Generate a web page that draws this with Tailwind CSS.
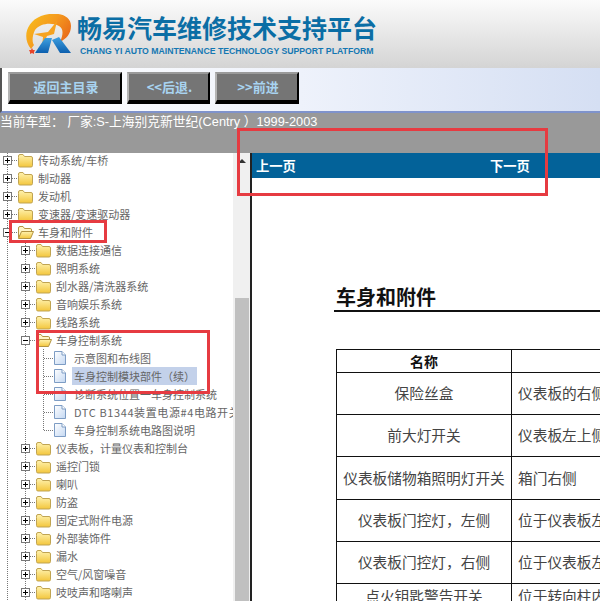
<!DOCTYPE html>
<html lang="zh">
<head>
<meta charset="utf-8">
<script src="https://cdn.jsdelivr.net/npm/@tailwindcss/browser@4"></script>
</head>
<body class="m-0 bg-white">
<svg width="0" height="0" class="absolute">
  <defs>
    <linearGradient id="fg" x1="0" y1="0" x2="0" y2="1"><stop offset="0" stop-color="#fff3b0"/><stop offset="1" stop-color="#f3c63c"/></linearGradient>
    <linearGradient id="dg" x1="0" y1="0" x2="1" y2="1"><stop offset="0" stop-color="#ffffff"/><stop offset="1" stop-color="#c4d8f2"/></linearGradient>
    <linearGradient id="ring" x1="0" y1="0" x2="1" y2="0.6"><stop offset="0" stop-color="#f7c21c"/><stop offset="0.55" stop-color="#f59a1e"/><stop offset="1" stop-color="#e8691a"/></linearGradient>
    <linearGradient id="leg" x1="0" y1="0" x2="0" y2="1"><stop offset="0" stop-color="#3fa0e0"/><stop offset="1" stop-color="#0c5fae"/></linearGradient>
    <symbol id="folder" viewBox="0 0 15 15"><path d="M0.5 4.5 V3 Q0.5 1.5 2 1.5 H5 L6.5 3.5 H13 Q14.5 3.5 14.5 5 V12.5 Q14.5 14 13 14 H2 Q0.5 14 0.5 12.5 Z" fill="url(#fg)" stroke="#c0a452"/></symbol>
    <symbol id="folder-open" viewBox="0 0 16 15"><path d="M0.5 12.5 V3 Q0.5 1.5 2 1.5 H5 L6.5 3.5 H12.5 Q13.5 3.5 13.5 5 V7 H4 Z" fill="#fff6c8" stroke="#b39442"/><path d="M0.5 13.5 L3.5 6.5 H15.5 L12.5 13.5 Z" fill="url(#fg)" stroke="#b39442"/></symbol>
    <symbol id="doc" viewBox="0 0 12 14"><path d="M0.5 0.5 H8 L11.5 4 V13.5 H0.5 Z" fill="url(#dg)" stroke="#7d9cc4"/><path d="M8 0.5 V4 H11.5" fill="#fff" stroke="#7d9cc4"/></symbol>
    <symbol id="p0" viewBox="0 0 18 18"><path d="M7.5 0 V18 M12 9.5 H18" stroke="#777" stroke-dasharray="1 1" fill="none"/><rect x="3.5" y="5.5" width="8" height="8" fill="#fff" stroke="#777"/><path d="M5 9.5 H10 M7.5 7 V12" stroke="#000"/></symbol>
    <symbol id="m0" viewBox="0 0 18 18"><path d="M7.5 0 V18 M12 9.5 H18" stroke="#777" stroke-dasharray="1 1" fill="none"/><rect x="3.5" y="5.5" width="8" height="8" fill="#fff" stroke="#777"/><path d="M5 9.5 H10" stroke="#000"/></symbol>
    <symbol id="p1" viewBox="0 0 36 18"><path d="M7.5 0 V18 M25.5 0 V18 M30 9.5 H36" stroke="#777" stroke-dasharray="1 1" fill="none"/><rect x="21.5" y="5.5" width="8" height="8" fill="#fff" stroke="#777"/><path d="M23 9.5 H28 M25.5 7 V12" stroke="#000"/></symbol>
    <symbol id="m1" viewBox="0 0 36 18"><path d="M7.5 0 V18 M25.5 0 V18 M30 9.5 H36" stroke="#777" stroke-dasharray="1 1" fill="none"/><rect x="21.5" y="5.5" width="8" height="8" fill="#fff" stroke="#777"/><path d="M23 9.5 H28" stroke="#000"/></symbol>
    <symbol id="l2" viewBox="0 0 54 18"><path d="M7.5 0 V18 M25.5 0 V18 M43.5 0 V18 M44 9.5 H54" stroke="#777" stroke-dasharray="1 1" fill="none"/></symbol>
    <symbol id="l2e" viewBox="0 0 54 18"><path d="M7.5 0 V18 M25.5 0 V18 M43.5 0 V9.5 H54" stroke="#777" stroke-dasharray="1 1" fill="none"/></symbol>
  </defs>
</svg>

<div class="relative w-[600px] h-[601px] overflow-hidden font-['Noto_Sans_CJK_SC','Liberation_Sans',sans-serif]">

  <!-- header -->
  <header class="h-[68px] bg-gradient-to-b from-[#fbfbfb] to-[#d4d4d4] flex items-start pl-[25px] pt-[14px] gap-[6px]">
    <svg class="w-[46px] h-[41px] shrink-0" viewBox="0 0 46 41">
      <path d="M6 35 C-3 24 1 8 16 2 C30 -3 46 0 46 12 C46 20 41 25 35 28 C38 21 39 15 34 12 C27 8 15 9 10 16 C7 22 7 28 9 31 Z" fill="url(#ring)"/>
      <path d="M9 20 L23 18 L32 7 L29 20 L22 22 L17 33 L18 23 Z" fill="#f6a320"/>
      <path d="M10 39 L20 24 L27 24 L23 39 Z" fill="url(#leg)"/>
      <path d="M27 26 L34 23 L46 39 L35 39 Z" fill="url(#leg)"/>
      <path d="M7 34 L8 36 L10 36 L9 38 L9 40 L7 39 L5 40 L5 38 L4 36 L6 36 Z" fill="#e8452a"/>
    </svg>
    <div class="flex flex-col">
      <div class="text-[25px] leading-[27px] font-bold text-[#0b6ea5] whitespace-nowrap">畅易汽车维修技术支持平台</div>
      <div class="text-[8.7px] leading-[12px] mt-[4px] ml-[3px] font-bold text-[#1477b2] font-['Liberation_Sans',sans-serif] whitespace-nowrap">CHANG YI AUTO MAINTENANCE TECHNOLOGY SUPPORT PLATFORM</div>
    </div>
  </header>

  <!-- nav -->
  <nav class="h-[45px] bg-gradient-to-r from-white via-[#eef2fb] to-[#d5dff3] border-b-2 border-[#7f93cc] border-l-2 border-l-[#555] pl-[6px] pt-[4px] flex items-start gap-[5px]">
    <a class="w-[114px] h-[32px] pl-[2px] flex items-center justify-center bg-[#757575] border-t-2 border-l-2 border-t-[#9a9a9a] border-l-[#b4b4b4] border-b-4 border-r-2 border-b-black border-r-black text-[13px] font-bold text-[#a8d3f0]">返回主目录</a>
    <a class="w-[83px] h-[32px] pl-[2px] flex items-center justify-center bg-[#757575] border-t-2 border-l-2 border-t-[#9a9a9a] border-l-[#b4b4b4] border-b-4 border-r-2 border-b-black border-r-black text-[13px] font-bold text-[#a8d3f0]">&lt;&lt;后退.</a>
    <a class="w-[84px] h-[32px] pl-[2px] flex items-center justify-center bg-[#757575] border-t-2 border-l-2 border-t-[#9a9a9a] border-l-[#b4b4b4] border-b-4 border-r-2 border-b-black border-r-black text-[13px] font-bold text-[#a8d3f0]">&gt;&gt;前进</a>
  </nav>

  <!-- current car bar -->
  <div class="h-[40px] pt-[1px] bg-[#999999] text-white text-[12.75px] leading-[16px] whitespace-nowrap font-['Liberation_Sans','Noto_Sans_CJK_SC',sans-serif]">当前车型： 厂家:S-上海别克新世纪(Centry ）1999-2003</div>

  <!-- main -->
  <div class="flex h-[448px]">
    <!-- tree -->
    <div class="w-[233px] shrink-0 overflow-hidden text-[11px] text-[#666] whitespace-nowrap">
      <ul class="-mt-[2px]">
        <li class="h-[18px] flex items-center"><svg class="w-[18px] h-[18px] shrink-0"><use href="#p0"/></svg><svg class="w-[15px] h-[15px] shrink-0"><use href="#folder"/></svg><span class="ml-[5px]">传动系统/车桥</span></li>
        <li class="h-[18px] flex items-center"><svg class="w-[18px] h-[18px] shrink-0"><use href="#p0"/></svg><svg class="w-[15px] h-[15px] shrink-0"><use href="#folder"/></svg><span class="ml-[5px]">制动器</span></li>
        <li class="h-[18px] flex items-center"><svg class="w-[18px] h-[18px] shrink-0"><use href="#p0"/></svg><svg class="w-[15px] h-[15px] shrink-0"><use href="#folder"/></svg><span class="ml-[5px]">发动机</span></li>
        <li class="h-[18px] flex items-center"><svg class="w-[18px] h-[18px] shrink-0"><use href="#p0"/></svg><svg class="w-[15px] h-[15px] shrink-0"><use href="#folder"/></svg><span class="ml-[5px]">变速器/变速驱动器</span></li>
        <li class="h-[18px] flex items-center"><svg class="w-[18px] h-[18px] shrink-0"><use href="#m0"/></svg><svg class="w-[16px] h-[15px] shrink-0"><use href="#folder-open"/></svg><span class="ml-[4px]">车身和附件</span></li>

        <li class="h-[18px] flex items-center"><svg class="w-[36px] h-[18px] shrink-0"><use href="#p1"/></svg><svg class="w-[15px] h-[15px] shrink-0"><use href="#folder"/></svg><span class="ml-[5px]">数据连接通信</span></li>
        <li class="h-[18px] flex items-center"><svg class="w-[36px] h-[18px] shrink-0"><use href="#p1"/></svg><svg class="w-[15px] h-[15px] shrink-0"><use href="#folder"/></svg><span class="ml-[5px]">照明系统</span></li>
        <li class="h-[18px] flex items-center"><svg class="w-[36px] h-[18px] shrink-0"><use href="#p1"/></svg><svg class="w-[15px] h-[15px] shrink-0"><use href="#folder"/></svg><span class="ml-[5px]">刮水器/清洗器系统</span></li>
        <li class="h-[18px] flex items-center"><svg class="w-[36px] h-[18px] shrink-0"><use href="#p1"/></svg><svg class="w-[15px] h-[15px] shrink-0"><use href="#folder"/></svg><span class="ml-[5px]">音响娱乐系统</span></li>
        <li class="h-[18px] flex items-center"><svg class="w-[36px] h-[18px] shrink-0"><use href="#p1"/></svg><svg class="w-[15px] h-[15px] shrink-0"><use href="#folder"/></svg><span class="ml-[5px]">线路系统</span></li>
        <li class="h-[18px] flex items-center"><svg class="w-[36px] h-[18px] shrink-0"><use href="#m1"/></svg><svg class="w-[16px] h-[15px] shrink-0"><use href="#folder-open"/></svg><span class="ml-[4px]">车身控制系统</span></li>

        <li class="h-[18px] flex items-center"><svg class="w-[54px] h-[18px] shrink-0"><use href="#l2"/></svg><svg class="w-[12px] h-[14px] shrink-0"><use href="#doc"/></svg><span class="ml-[8px]">示意图和布线图</span></li>
        <li class="h-[18px] flex items-center"><svg class="w-[54px] h-[18px] shrink-0"><use href="#l2"/></svg><svg class="w-[12px] h-[14px] shrink-0"><use href="#doc"/></svg><span class="ml-[6px] w-[125px] pl-[2px] leading-[18px] bg-[#c3d1ea]">车身控制模块部件（续）</span></li>
        <li class="h-[18px] flex items-center"><svg class="w-[54px] h-[18px] shrink-0"><use href="#l2"/></svg><svg class="w-[12px] h-[14px] shrink-0"><use href="#doc"/></svg><span class="ml-[8px]">诊断系统位置一车身控制系统</span></li>
        <li class="h-[18px] flex items-center"><svg class="w-[54px] h-[18px] shrink-0"><use href="#l2"/></svg><svg class="w-[12px] h-[14px] shrink-0"><use href="#doc"/></svg><span class="ml-[8px] tracking-[0.6px]">DTC B1344装置电源#4电路开关</span></li>
        <li class="h-[18px] flex items-center"><svg class="w-[54px] h-[18px] shrink-0"><use href="#l2e"/></svg><svg class="w-[12px] h-[14px] shrink-0"><use href="#doc"/></svg><span class="ml-[8px]">车身控制系统电路图说明</span></li>

        <li class="h-[18px] flex items-center"><svg class="w-[36px] h-[18px] shrink-0"><use href="#p1"/></svg><svg class="w-[15px] h-[15px] shrink-0"><use href="#folder"/></svg><span class="ml-[5px]">仪表板，计量仪表和控制台</span></li>
        <li class="h-[18px] flex items-center"><svg class="w-[36px] h-[18px] shrink-0"><use href="#p1"/></svg><svg class="w-[15px] h-[15px] shrink-0"><use href="#folder"/></svg><span class="ml-[5px]">遥控门锁</span></li>
        <li class="h-[18px] flex items-center"><svg class="w-[36px] h-[18px] shrink-0"><use href="#p1"/></svg><svg class="w-[15px] h-[15px] shrink-0"><use href="#folder"/></svg><span class="ml-[5px]">喇叭</span></li>
        <li class="h-[18px] flex items-center"><svg class="w-[36px] h-[18px] shrink-0"><use href="#p1"/></svg><svg class="w-[15px] h-[15px] shrink-0"><use href="#folder"/></svg><span class="ml-[5px]">防盗</span></li>
        <li class="h-[18px] flex items-center"><svg class="w-[36px] h-[18px] shrink-0"><use href="#p1"/></svg><svg class="w-[15px] h-[15px] shrink-0"><use href="#folder"/></svg><span class="ml-[5px]">固定式附件电源</span></li>
        <li class="h-[18px] flex items-center"><svg class="w-[36px] h-[18px] shrink-0"><use href="#p1"/></svg><svg class="w-[15px] h-[15px] shrink-0"><use href="#folder"/></svg><span class="ml-[5px]">外部装饰件</span></li>
        <li class="h-[18px] flex items-center"><svg class="w-[36px] h-[18px] shrink-0"><use href="#p1"/></svg><svg class="w-[15px] h-[15px] shrink-0"><use href="#folder"/></svg><span class="ml-[5px]">漏水</span></li>
        <li class="h-[18px] flex items-center"><svg class="w-[36px] h-[18px] shrink-0"><use href="#p1"/></svg><svg class="w-[15px] h-[15px] shrink-0"><use href="#folder"/></svg><span class="ml-[5px]">空气/风窗噪音</span></li>
        <li class="h-[18px] flex items-center"><svg class="w-[36px] h-[18px] shrink-0"><use href="#p1"/></svg><svg class="w-[15px] h-[15px] shrink-0"><use href="#folder"/></svg><span class="ml-[5px]">吱吱声和喀喇声</span></li>
      </ul>
    </div>

    <!-- scrollbar -->
    <div class="w-[17px] shrink-0 bg-[#f0f0f0] flex flex-col items-center pt-[6px]">
      <div class="w-0 h-0 border-l-[4px] border-r-[4px] border-b-[4px] border-l-transparent border-r-transparent border-b-[#333]"></div>
      <div class="w-[14px] h-[303px] mt-[135px] bg-[#c0c0c0]"></div>
    </div>

    <!-- content -->
    <main class="flex-1 min-w-0 border-l-2 border-[#222] bg-white overflow-hidden">
      <div class="h-[25px] bg-[#036299] flex items-center text-white text-[13.3px] font-bold whitespace-nowrap pl-[4px]">
        <span class="w-[234px]">上一页</span><span>下一页</span>
      </div>
      <h1 class="mt-[106px] ml-[82px] pl-[2px] w-[300px] h-[28px] border-b-2 border-[#111] text-[20px] leading-[26px] font-bold text-[#111]">车身和附件</h1>
      <table class="mt-[37px] ml-[84px] border-collapse table-fixed w-[380px] text-[14.7px] text-[#444] whitespace-nowrap">
        <colgroup><col class="w-[175px]"><col class="w-[205px]"></colgroup>
        <tr class="h-[23px]"><th class="border border-[#111] text-[14px] font-bold text-[#111] leading-[20px]">名称</th><th class="border border-[#111]"></th></tr>
        <tr class="h-[42px]"><td class="border border-[#111] text-center">保险丝盒</td><td class="border border-[#111] pl-[6px]">仪表板的右侧</td></tr>
        <tr class="h-[42px]"><td class="border border-[#111] text-center">前大灯开关</td><td class="border border-[#111] pl-[6px]">仪表板左上侧</td></tr>
        <tr class="h-[43px]"><td class="border border-[#111] text-center">仪表板储物箱照明灯开关</td><td class="border border-[#111] pl-[6px]">箱门右侧</td></tr>
        <tr class="h-[42px]"><td class="border border-[#111] text-center">仪表板门控灯，左侧</td><td class="border border-[#111] pl-[6px]">位于仪表板左</td></tr>
        <tr class="h-[42px]"><td class="border border-[#111] text-center">仪表板门控灯，右侧</td><td class="border border-[#111] pl-[6px]">位于仪表板左</td></tr>
        <tr class="h-[42px]"><td class="border border-[#111] text-center align-top pt-[1px]">点火钥匙警告开关</td><td class="border border-[#111] pl-[6px] align-top pt-[1px]">位于转向柱内</td></tr>
      </table>
    </main>
  </div>

  <!-- red annotation boxes -->
  <div class="absolute left-[237px] top-[128px] w-[311px] h-[68px] border-[3px] border-[#e63b41]"></div>
  <div class="absolute left-[9px] top-[220px] w-[98px] h-[23px] border-[3px] border-[#e63b41]"></div>
  <div class="absolute left-[36px] top-[330px] w-[174px] h-[64px] border-[3px] border-[#e63b41]"></div>
</div>
</body>
</html>
